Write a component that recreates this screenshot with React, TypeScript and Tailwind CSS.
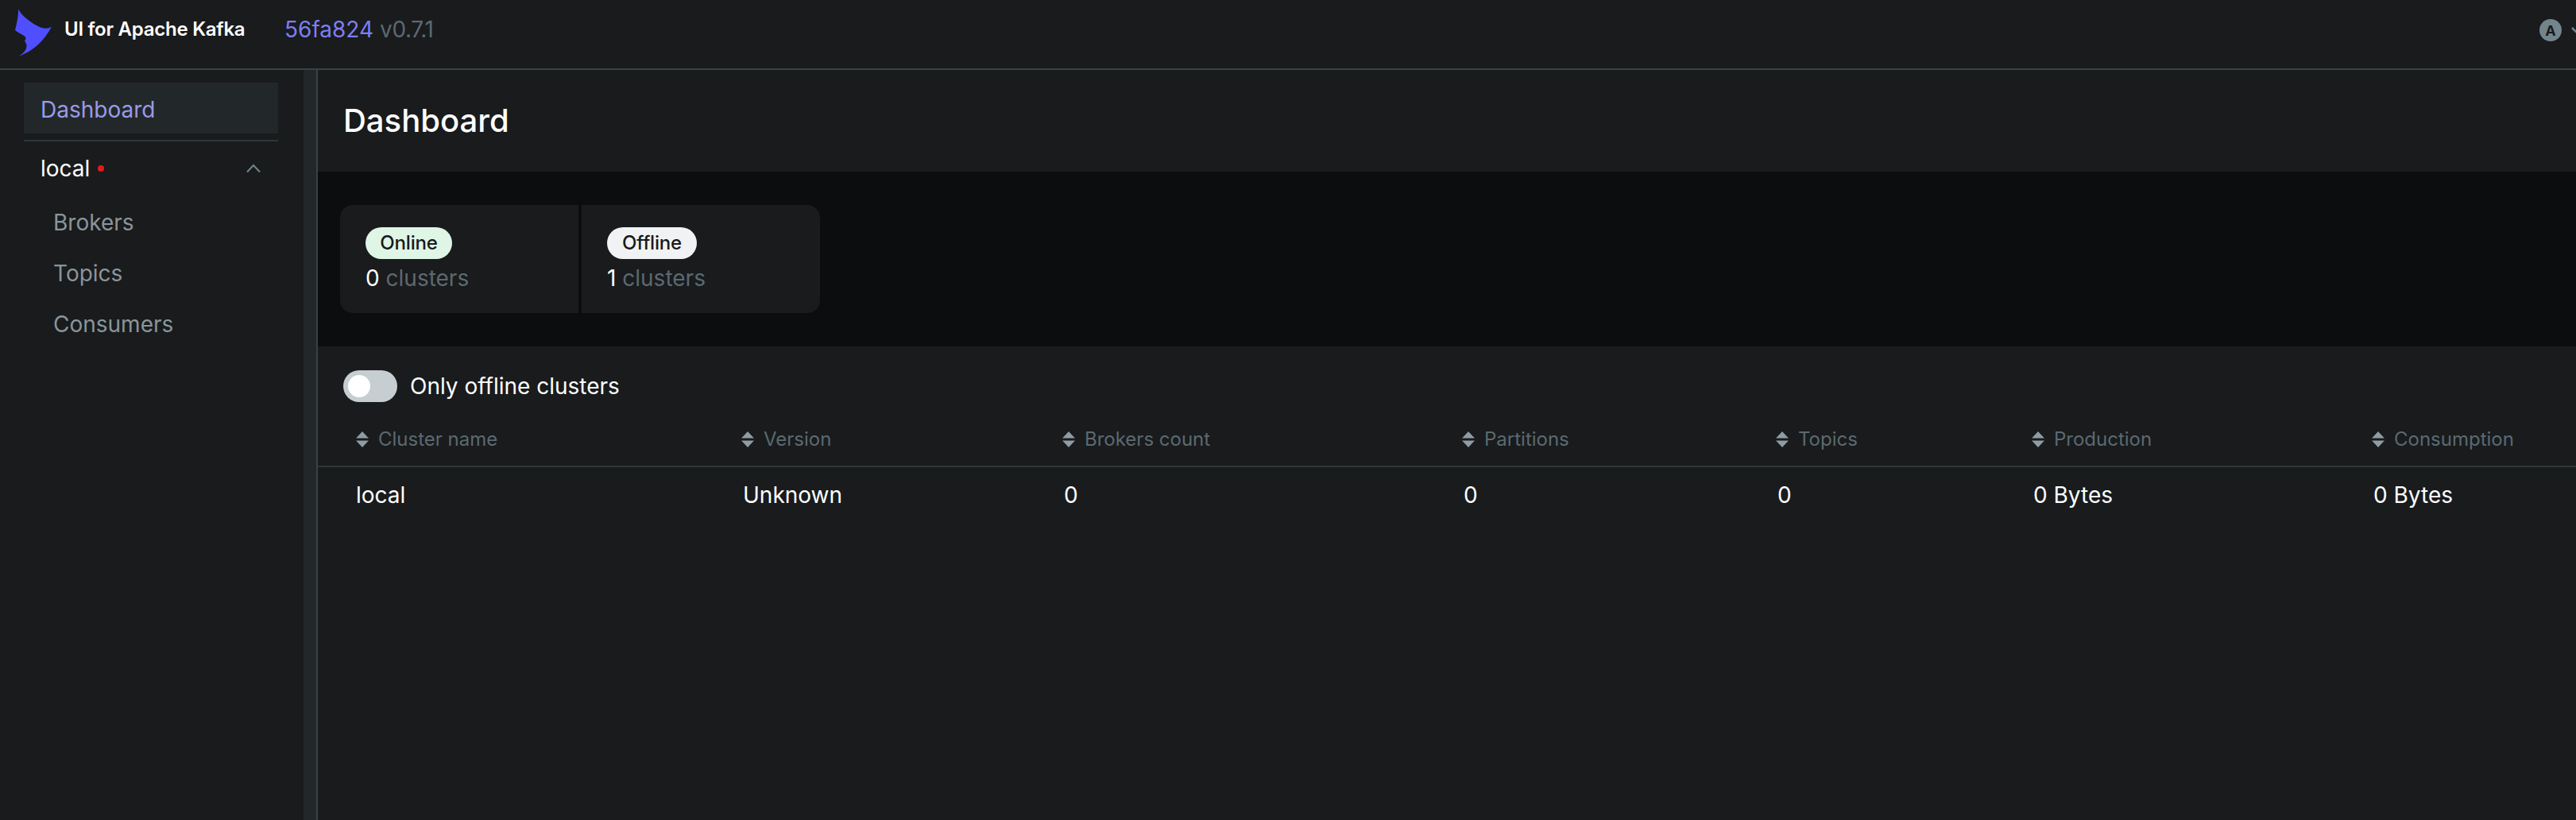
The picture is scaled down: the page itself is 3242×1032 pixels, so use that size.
import React from "react";

const columns = [
  { name: "Cluster name", value: "local" },
  { name: "Version", value: "Unknown" },
  { name: "Brokers count", value: "0" },
  { name: "Partitions", value: "0" },
  { name: "Topics", value: "0" },
  { name: "Production", value: "0 Bytes" },
  { name: "Consumption", value: "0 Bytes" },
];

function SortIcon() {
  return (
    <svg width="16" height="20" viewBox="0 0 16 20" className="shrink-0">
      <path d="M8 0 L16 8.5 L0 8.5 Z" fill="#8F9CA3" />
      <path d="M0 11.5 L16 11.5 L8 20 Z" fill="#8F9CA3" />
    </svg>
  );
}

function Stat({ label, count, pill, width }: { label: string; count: string; pill: string; width: string }) {
  return (
    <div className="w-[300px] h-[136px] bg-[#191B1D] pl-8 pt-7 first:rounded-l-2xl last:rounded-r-2xl">
      <div className={`${pill} ${width} h-10 rounded-[20px] flex items-center justify-center text-[24px] font-medium tracking-[-0.2px] text-[#171A1C]`}>
        {label}
      </div>
      <div className="text-[28px] leading-10 mt-1 text-white">
        {count} <span className="text-[#5C6970]">clusters</span>
      </div>
    </div>
  );
}

export default function App() {
  return (
    <div className="w-[3242px] h-[1032px] overflow-hidden bg-[#191B1D] text-white font-['Inter',sans-serif] flex flex-col">
      <header className="h-[88px] shrink-0 border-b-2 border-[#394246] flex items-center pb-3">
        <svg width="48" height="62" viewBox="0 0 48 62" className="ml-[18px] mr-[15px] mt-[10px] shrink-0">
          <path
            d="M5.3 0 C8 9 25 20 32 23 C37 25 42 25.5 47 22.5 C38 40 24 53 5.5 60 C11 56 15 53 15.5 47 C16 45 14 43 13 40 C16 37 15 35 7 31 C4 29 2 28 1 27 C3 19 5 10 5.3 0 Z"
            fill="#4F4FFF"
          />
        </svg>
        <span className="text-[24px] font-semibold leading-8 w-[278px] tracking-[-0.25px]">UI for Apache Kafka</span>
        <span className="text-[28px] leading-8 text-[#7E7EF1] -ml-[1px]">56fa824</span>
        <span className="text-[28px] leading-8 text-[#5C6970] ml-2 tracking-[-0.4px]">v0.7.1</span>
        <div className="ml-auto flex items-center mt-[2px]">
          <div className="w-7 h-7 rounded-full bg-[#73848C] text-[#191B1D] flex items-center justify-center text-[18px] font-bold">A</div>
          <svg width="12" height="8" viewBox="0 0 12 8" className="ml-3 mr-[-6px]">
            <path d="M1 1 L6 6 L11 1" fill="none" stroke="#73848C" strokeWidth="2.5" />
          </svg>
        </div>
      </header>
      <div className="flex flex-1 min-h-0">
        <aside className="w-[382px] shrink-0 pl-[30px] pr-8 pt-4">
          <div className="h-16 bg-[#22282A] flex items-center pl-[21px] pt-1 text-[28px] text-[#9A9AE8]">Dashboard</div>
          <div className="h-[2px] bg-[#2F3639] mt-2" />
          <div className="h-[68px] flex items-center pl-[21px] pr-[21px] text-[28px] text-white">
            <span>local</span>
            <span className="w-2 h-2 rounded-full bg-[#E51A1A] ml-[10px]" />
            <svg width="20" height="12" viewBox="0 0 20 12" className="ml-auto">
              <path d="M2 10.5 L10 2 L18 10.5" fill="none" stroke="#73848C" strokeWidth="2" />
            </svg>
          </div>
          <div className="text-[28px] text-[#8A959B]">
            <div className="h-16 flex items-center pl-[37px] pt-1">Brokers</div>
            <div className="h-16 flex items-center pl-[37px] pt-1">Topics</div>
            <div className="h-16 flex items-center pl-[37px] pt-1">Consumers</div>
          </div>
        </aside>
        <div className="w-4 shrink-0 bg-[#22282A]" />
        <div className="w-[2px] shrink-0 bg-[#394246]" />
        <main className="flex-1 min-w-0">
          <div className="h-[128px] flex items-center pl-8 text-[40px] font-medium leading-none">Dashboard</div>
          <div className="h-[220px] bg-[#0B0D0E] pt-[42px] pl-7 flex gap-1 items-start">
            <Stat label="Online" count="0" pill="bg-[#DFF5E6]" width="w-[109px]" />
            <Stat label="Offline" count="1" pill="bg-[#F1F2F3]" width="w-[113px]" />
          </div>
          <div className="h-[70px] pl-8 pt-[30px] flex items-start gap-[16px] text-[28px] leading-10">
            <div className="w-[68px] h-10 rounded-full bg-[#C7CED1] p-[6px]">
              <div className="w-7 h-7 rounded-full bg-white" />
            </div>
            <span>Only offline clusters</span>
          </div>
          <div className="mt-[10px] grid grid-cols-[533px_404px_503px_395px_322px_428px_1fr]">
            {columns.map((c, i) => (
              <div key={c.name} className={`h-[72px] pt-1 border-b-2 border-[#2F3639] flex items-center gap-[12px] ${i === 0 ? "pl-12" : "pl-0"} text-[24px] text-[#5C6970] font-normal`}>
                <SortIcon />
                <span>{c.name}</span>
              </div>
            ))}
            {columns.map((c, i) => (
              <div key={c.name} className={`h-[70px] flex items-center ${i === 0 ? "pl-12" : "pl-[2px]"} text-[28px] text-white`}>
                {c.value}
              </div>
            ))}
          </div>
        </main>
      </div>
    </div>
  );
}
